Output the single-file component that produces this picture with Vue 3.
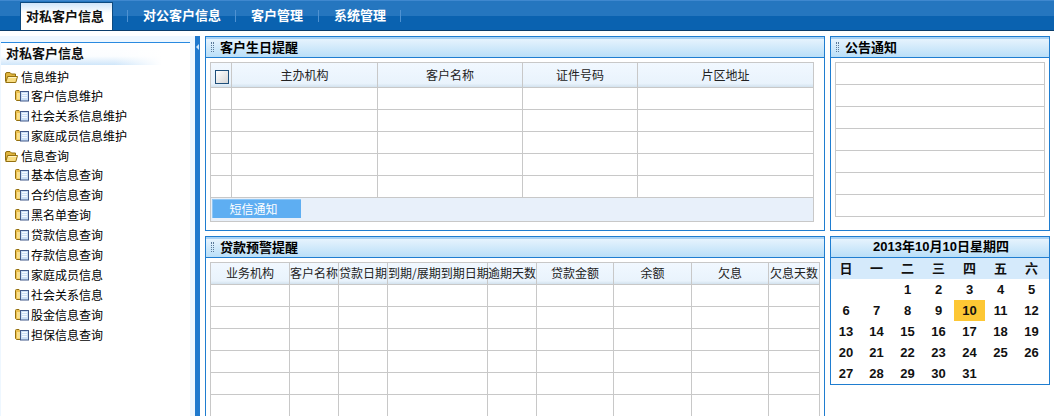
<script setup>
const navItems = ['对公客户信息', '客户管理', '系统管理']
const tree = [
  { name: '信息维护', children: ['客户信息维护', '社会关系信息维护', '家庭成员信息维护'] },
  { name: '信息查询', children: ['基本信息查询', '合约信息查询', '黑名单查询', '贷款信息查询', '存款信息查询', '家庭成员信息', '社会关系信息', '股金信息查询', '担保信息查询'] }
]
const birthCols = [
  { t: '', w: 21 }, { t: '主办机构', w: 146 }, { t: '客户名称', w: 145 }, { t: '证件号码', w: 115 }, { t: '片区地址', w: 176 }
]
const loanCols = [
  { t: '业务机构', w: 79 }, { t: '客户名称', w: 49 }, { t: '贷款日期', w: 49 }, { t: '到期/展期到期日期', w: 100 },
  { t: '逾期天数', w: 49 }, { t: '贷款金额', w: 77 }, { t: '余额', w: 78 }, { t: '欠息', w: 77 }, { t: '欠息天数', w: 51 }
]
const week = ['日', '一', '二', '三', '四', '五', '六']
const days = ['', '', ...Array.from({ length: 31 }, (_, i) => i + 1)]
</script>

<template>
  <div class="page">
    <header class="topbar">
      <div class="tab">对私客户信息</div>
      <div v-for="n in navItems" :key="n" class="nav-item">{{ n }}</div>
      <div class="nav-end"></div>
    </header>

    <div class="body">
      <aside class="side">
        <div class="side-inner">
          <div class="side-title">对私客户信息</div>
          <div class="tree">
            <template v-for="g in tree" :key="g.name">
              <div class="root-row">
                <svg class="ico-folder" width="13" height="11" viewBox="0 0 13 11">
                  <path d="M.5 9.5V2Q.5.5 2 .5H5L6.5 2H10.5V4.5" fill="#dfb43e" stroke="#94700f" />
                  <path d="M.8 10.5L2.6 4.5H12.5L10.8 10.5Z" fill="#f8dc80" stroke="#94700f" />
                  <path d="M3.4 5.5H11.4" stroke="#fff4c4" />
                </svg>
                <span>{{ g.name }}</span>
              </div>
              <div v-for="c in g.children" :key="c" class="child-row">
                <svg class="ico-doc" width="14" height="12" viewBox="0 0 14 12">
                  <path d="M.5 9.5V1.5Q.5.5 1.5.5H4L5 1.5H7V10.5H1.5Z" fill="#ecc04e" stroke="#94700f" />
                  <path d="M2 3H5.5V9.5H2Z" fill="#f9e08c" />
                  <rect x="5.5" y="1.5" width="8" height="9.5" fill="#c9def6" stroke="#41598a" />
                  <path d="M7 3.5H12M7 5.5H12M7 7.5H12" stroke="#f4f9ff" />
                </svg>
                <span>{{ c }}</span>
              </div>
            </template>
          </div>
        </div>
      </aside>

      <div class="splitter"><i class="arrow"></i></div>

      <main class="main">
        <section class="panel">
          <h3 class="panel-head"><i class="grip"></i>客户生日提醒</h3>
          <div class="panel-body">
            <table class="grid" :style="{ width: '604px' }">
              <colgroup><col v-for="c in birthCols" :key="c.t" :style="{ width: c.w + 'px' }" /></colgroup>
              <thead>
                <tr class="tall">
                  <th v-for="(c, i) in birthCols" :key="i">
                    <i v-if="i === 0" class="check"></i>
                    <template v-else>{{ c.t }}</template>
                  </th>
                </tr>
              </thead>
              <tbody>
                <tr v-for="r in 5" :key="r"><td v-for="(c, i) in birthCols" :key="i"></td></tr>
                <tr class="foot">
                  <td colspan="5"><button class="sms">短信通知</button></td>
                </tr>
              </tbody>
            </table>
          </div>
        </section>

        <section class="panel">
          <h3 class="panel-head"><i class="grip"></i>公告通知</h3>
          <div class="panel-body">
            <table class="grid" :style="{ width: '210px' }">
              <tbody>
                <tr v-for="r in 7" :key="r"><td></td></tr>
              </tbody>
            </table>
          </div>
        </section>

        <section class="panel panel-open">
          <h3 class="panel-head"><i class="grip"></i>贷款预警提醒</h3>
          <div class="panel-body">
            <table class="grid" :style="{ width: '610px' }">
              <colgroup><col v-for="c in loanCols" :key="c.t" :style="{ width: c.w + 'px' }" /></colgroup>
              <thead>
                <tr><th v-for="c in loanCols" :key="c.t">{{ c.t }}</th></tr>
              </thead>
              <tbody>
                <tr v-for="r in 6" :key="r"><td v-for="c in loanCols" :key="c.t"></td></tr>
              </tbody>
            </table>
          </div>
        </section>

        <section class="panel calendar">
          <h3 class="panel-head cal-head">2013年10月10日星期四</h3>
          <div class="cal-grid cal-week">
            <span v-for="d in week" :key="d">{{ d }}</span>
          </div>
          <div class="cal-grid cal-days">
            <span v-for="(d, i) in days" :key="i" :class="{ today: d === 10 }">{{ d }}</span>
          </div>
        </section>
      </main>
    </div>
  </div>
</template>

<style>
html, body { margin: 0; background: #fff; }
</style>

<style scoped>
.page {
  width: 1054px;
  height: 416px;
  overflow: hidden;
  background: #fff;
  font: 12px/1.2 "Noto Sans CJK SC", sans-serif;
  color: #111;
}
.topbar {
  box-sizing: border-box;
  height: 31px;
  display: flex;
  align-items: center;
  padding-left: 20px;
  border-top: 1px solid #3f88cf;
  border-bottom: 1px solid #0b3d6b;
  background: linear-gradient(#2576bf 0, #2576bf 15px, #0a62b0 15px);
  color: #fff;
  font-size: 13px;
  font-weight: 700;
}
.tab {
  box-sizing: border-box;
  width: 93px;
  height: 28px;
  margin: 1px 14px 0 0;
  padding-left: 5px;
  align-self: flex-start;
  border: 1px solid #0d4a80;
  border-bottom: 0;
  background: linear-gradient(#cfe5fa, #fff 10px);
  color: #111;
  line-height: 25px;
  white-space: nowrap;
}
.nav-item {
  height: 12px;
  padding: 0 15px;
  border-left: 1px solid #4f92d2;
  line-height: 10px;
  white-space: nowrap;
}
.nav-item:nth-child(2),
.nav-item:nth-child(4) { padding-right: 14px; }
.nav-end { height: 12px; border-left: 1px solid #4f92d2; }

.body {
  display: flex;
  height: 385px;
}
.side {
  width: 195px;
  margin-top: 5px;
  flex: none;
  box-sizing: border-box;
  padding: 6px 5px 0 1px;
  background: #eef7ff;
}
.side-inner {
  height: 100%;
  background: #fff;
  border-top: 1px solid #2a8ae0;
}
.side-title {
  height: 22px;
  padding-left: 5px;
  margin-bottom: 2px;
  font-size: 13px;
  font-weight: 700;
  line-height: 20px;
  background:
    linear-gradient(90deg, rgba(255,255,255,0) 60%, #fff 85%),
    linear-gradient(#fff, #fbfdff 60%, #cfe6fa);
}
.root-row, .child-row { display: flex; align-items: center; white-space: nowrap; color: #000; box-sizing: border-box; }
.root-row { height: 19px; padding: 1px 0 0 4px; }
.child-row { height: 20px; padding-left: 14px; }
.ico-folder { flex: none; margin-right: 3px; }
.ico-doc { flex: none; margin-right: 2px; }

.splitter {
  position: relative;
  width: 5px;
  flex: none;
  margin-top: 5px;
  background: #2079cd;
}
.arrow {
  position: absolute;
  left: 1px;
  top: 8px;
  border: 3px solid transparent;
  border-right-color: #cfe6fa;
  border-left-width: 0;
}

.main {
  display: grid;
  grid-template-columns: 620px 220px;
  grid-template-rows: 195px 200px;
  gap: 5px;
  padding: 5px 0 0 5px;
  overflow: hidden;
}
.panel {
  box-sizing: border-box;
  border: 1px solid #1f7dd0;
  background: #fff;
  min-width: 0;
  overflow: hidden;
}
.panel-open { height: 200px; }
.panel-head {
  box-sizing: border-box;
  display: flex;
  align-items: center;
  height: 21px;
  margin: 0;
  padding-left: 5px;
  border-bottom: 1px solid #1f7dd0;
  background: linear-gradient(#a9d2f4 0, #a9d2f4 2px, #e6f3fd 2px, #b9dff8);
  font-size: 13px;
  font-weight: 700;
  color: #000;
}
.grip {
  width: 1px;
  height: 10px;
  margin-right: 6px;
  border-left: 1px dotted #5b7a99;
  border-right: 1px dotted #5b7a99;
}
.panel-body { padding: 4px; }

.grid {
  table-layout: fixed;
  border-collapse: separate;
  border-spacing: 0;
  border-left: 1px solid #c8c8c8;
  border-top: 1px solid #c8c8c8;
}
.grid td, .grid th {
  box-sizing: border-box;
  height: 22px;
  padding: 0;
  border-right: 1px solid #c8c8c8;
  border-bottom: 1px solid #c8c8c8;
  overflow: visible;
  white-space: nowrap;
}
.grid th {
  background: linear-gradient(#f1f8ff, #e9f3fc 85%, #d3e2ee);
  font-weight: 400;
  color: #222;
  text-align: center;
}
.grid .tall th { height: 25px; }
.check {
  display: block;
  box-sizing: border-box;
  width: 14px;
  height: 14px;
  margin: 4px 0 0 4px;
  border: 1px solid #1f4f7a;
  background: linear-gradient(135deg, #fff, #d6d6d6);
}
.grid .foot td {
  height: 24px;
  background: #e8f0fa;
  vertical-align: top;
}
.sms {
  display: block;
  box-sizing: border-box;
  width: 89px;
  height: 19px;
  margin: 1px 0 0 1px;
  padding: 0 7px 0 0;
  border: 0;
  border-top: 1px solid #8cc6f6;
  border-left: 1px solid #8cc6f6;
  background: #5eaef2;
  color: #fff;
  font: inherit;
}

.calendar {
  height: 149px;
  font-family: "Liberation Sans", "Noto Sans CJK SC", sans-serif;
  font-weight: 700;
  color: #111;
}
.cal-head {
  justify-content: center;
  padding: 0 0 0 2px;
  font-family: inherit;
}
.cal-grid {
  display: grid;
  grid-template-columns: 30px repeat(6, 31px);
  text-align: center;
}
.cal-grid span { height: 21px; line-height: 21px; }
.cal-week { background: #d5eafb; font-size: 13px; }
.cal-days { font-size: 13px; }
.today { background: #fdc734; }
</style>
